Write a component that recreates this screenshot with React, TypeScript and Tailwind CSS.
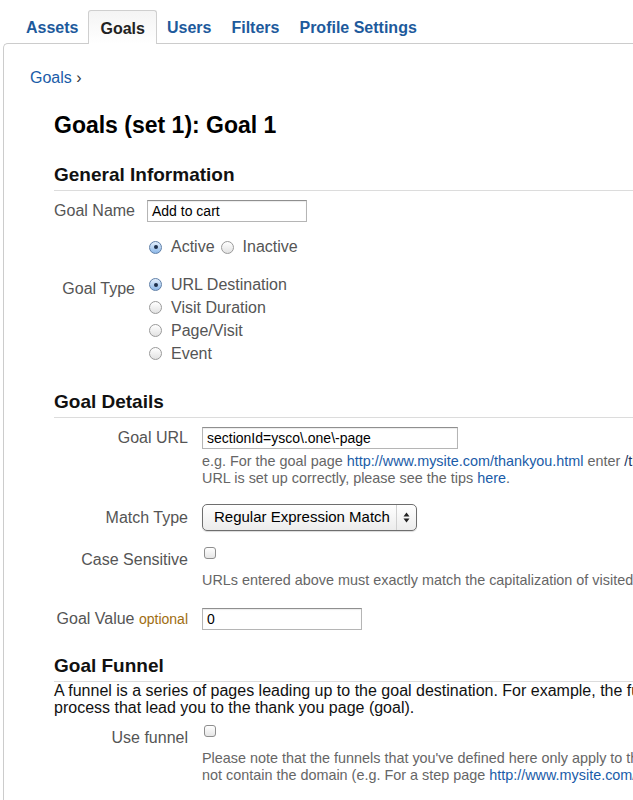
import React from 'react';

const Radio: React.FC<{ checked?: boolean }> = ({ checked }) => (
  <span
    className={
      checked
        ? 'flex h-[13px] w-[13px] shrink-0 items-center justify-center rounded-full border border-[#5f7fa8] bg-gradient-to-b from-[#e3effc] to-[#8db8e8]'
        : 'flex h-[13px] w-[13px] shrink-0 items-center justify-center rounded-full border border-[#9a9a9a] bg-gradient-to-b from-white to-[#e2e2e2]'
    }
  >
    {checked && <span className="h-[4px] w-[4px] rounded-full bg-[#1d2f4a]" />}
  </span>
);

const Checkbox: React.FC = () => (
  <span className="block h-[12px] w-[12px] shrink-0 rounded-[3px] border border-[#8e8e8e] bg-gradient-to-b from-white to-[#e6e6e6]" />
);

const TextInput: React.FC<{ value: string; width: string }> = ({ value, width }) => (
  <div
    className={`${width} flex h-[22px] items-center border border-[#b5b5b5] border-t-[#8f8f8f] bg-white px-[4px] text-[14px] text-black shadow-[inset_0_1px_1px_rgba(0,0,0,0.08)]`}
  >
    {value}
  </div>
);

const Heading: React.FC<{ children: React.ReactNode }> = ({ children }) => (
  <div className="border-b border-[#dcdcdc] pb-[4px] text-[19px] font-bold leading-[22px] text-[#111]">{children}</div>
);

const link = 'text-[#1a5ca8]';

export default function App() {
  const tab = 'flex h-[34px] items-center px-[10px] pt-[2px] text-[16px] font-bold text-[#1d5a9c]';

  return (
    <div className="h-[800px] w-[633px] overflow-hidden bg-white font-['Liberation_Sans',Arial,sans-serif]">
      {/* tabs */}
      <div className="relative z-10 -mb-px flex pl-[16px] pt-[10px]">
        <div className={tab}>Assets</div>
        <div className="flex h-[34px] items-center rounded-t-[3px] border border-b-0 border-[#cfcfcf] bg-gradient-to-b from-[#f4f4f4] to-white px-[11px] pt-[2px] text-[16px] font-bold text-[#222]">
          Goals
        </div>
        <div className={tab}>Users</div>
        <div className={tab}>Filters</div>
        <div className={tab}>Profile Settings</div>
      </div>

      {/* panel */}
      <div className="ml-[3px] h-[800px] w-[900px] rounded-tl-[5px] border-l border-t border-[#cccccc] pl-[26px] pt-[24px]">
        <div className="text-[16px] leading-[20px]">
          <span className={link}>Goals</span> <span className="text-[#333]">›</span>
        </div>

        <div className="pl-[24px]">
          <div className="mt-[23px] text-[23px] font-bold leading-[28px] text-black">Goals (set 1): Goal 1</div>

          {/* General Information */}
          <div className="mt-[25px]">
            <Heading>General Information</Heading>
            <div className="mt-[8px] flex items-center">
              <div className="w-[93px] pr-[12px] text-right text-[16px] text-[#555]">Goal Name</div>
              <TextInput value="Add to cart" width="w-[160px]" />
            </div>
            <div className="mt-[14px] flex h-[20px] items-center pl-[95px] text-[16px] text-[#555]">
              <Radio checked />
              <span className="ml-[9px]">Active</span>
              <span className="ml-[6px]">
                <Radio />
              </span>
              <span className="ml-[9px]">Inactive</span>
            </div>
            <div className="mt-[16px] flex items-start">
              <div className="mt-[6px] w-[93px] pr-[12px] text-right text-[16px] leading-[20px] text-[#555]">Goal Type</div>
              <div className="flex flex-col pl-[2px] text-[16px] text-[#555]">
                {['URL Destination', 'Visit Duration', 'Page/Visit', 'Event'].map((t, i) => (
                  <div key={t} className="flex h-[23px] items-center">
                    <Radio checked={i === 0} />
                    <span className="ml-[9px]">{t}</span>
                  </div>
                ))}
              </div>
            </div>
          </div>

          {/* Goal Details */}
          <div className="mt-[26px]">
            <Heading>Goal Details</Heading>
            <div className="mt-[8px] flex items-center">
              <div className="w-[148px] pr-[14px] text-right text-[16px] text-[#555]">Goal URL</div>
              <TextInput value="sectionId=ysco\.one\-page" width="w-[256px]" />
            </div>
            <div className="mt-[3px] whitespace-nowrap pl-[148px] text-[14.4px] leading-[17px] text-[#666]">
              <div className="leading-[17px]">
                e.g. For the goal page <span className={link}>http://www.mysite.com/thankyou.html</span> enter{' '}
                <span className="text-[#1a3560]">/thankyou.html</span>. To help you verify that your goal
              </div>
              <div className="leading-[17px]">
                URL is set up correctly, please see the tips <span className={link}>here</span>.
              </div>
            </div>

            <div className="mt-[17px] flex items-center">
              <div className="w-[148px] pr-[14px] text-right text-[16px] text-[#555]">Match Type</div>
              <div className="flex h-[27px] w-[215px] items-center rounded-[5px] border border-[#6e6e6e] bg-gradient-to-b from-white to-[#ececec] text-[15px] text-black shadow-[0_1px_1px_rgba(0,0,0,0.15)]">
                <span className="flex-1 pl-[11px]">Regular Expression Match</span>
                <span className="flex h-full w-[20px] items-center justify-center border-l border-[#d0d0d0]">
                  <svg width="7" height="11" viewBox="0 0 7 11">
                    <path d="M3.5 0.5 L6.5 4.5 L0.5 4.5 Z" fill="#222" />
                    <path d="M3.5 10.5 L6.5 6.5 L0.5 6.5 Z" fill="#222" />
                  </svg>
                </span>
              </div>
            </div>

            <div className="mt-[19px] flex items-start">
              <div className="w-[148px] pr-[14px] text-right text-[16px] leading-[20px] text-[#555]">Case Sensitive</div>
              <span className="-mt-[3px] ml-[2px]">
                <Checkbox />
              </span>
            </div>
            <div className="mt-[2px] whitespace-nowrap pl-[148px] text-[14.4px] leading-[17px] text-[#666]">
              URLs entered above must exactly match the capitalization of visited URLs.
            </div>

            <div className="mt-[18px] flex items-center">
              <div className="w-[148px] pr-[14px] text-right text-[16px] text-[#555]">
                Goal Value <span className="text-[14px] text-[#a06d10]">optional</span>
              </div>
              <TextInput value="0" width="w-[160px]" />
            </div>
          </div>

          {/* Goal Funnel */}
          <div className="mt-[24px]">
            <Heading>Goal Funnel</Heading>
            <div className="whitespace-nowrap text-[16px] leading-[17px] text-[#111]">
              <div className="leading-[17px]">
                A funnel is a series of pages leading up to the goal destination. For example, the funnel may include steps in your checkout
              </div>
              <div className="leading-[17px]">process that lead you to the thank you page (goal).</div>
            </div>
            <div className="mt-[12px] flex items-start">
              <div className="w-[148px] pr-[14px] text-right text-[16px] leading-[20px] text-[#555]">Use funnel</div>
              <span className="-mt-[3px] ml-[2px]">
                <Checkbox />
              </span>
            </div>
            <div className="mt-[2px] whitespace-nowrap pl-[148px] text-[14.4px] leading-[17px] text-[#666]">
              <div className="leading-[17px]">
                Please note that the funnels that you've defined here only apply to the Funnel Visualization Report. Note: URL should
              </div>
              <div className="leading-[17px]">
                not contain the domain (e.g. For a step page <span className={link}>http://www.mysite.com/step1.html</span> enter /step1.html).
              </div>
            </div>
          </div>
        </div>
      </div>
    </div>
  );
}
